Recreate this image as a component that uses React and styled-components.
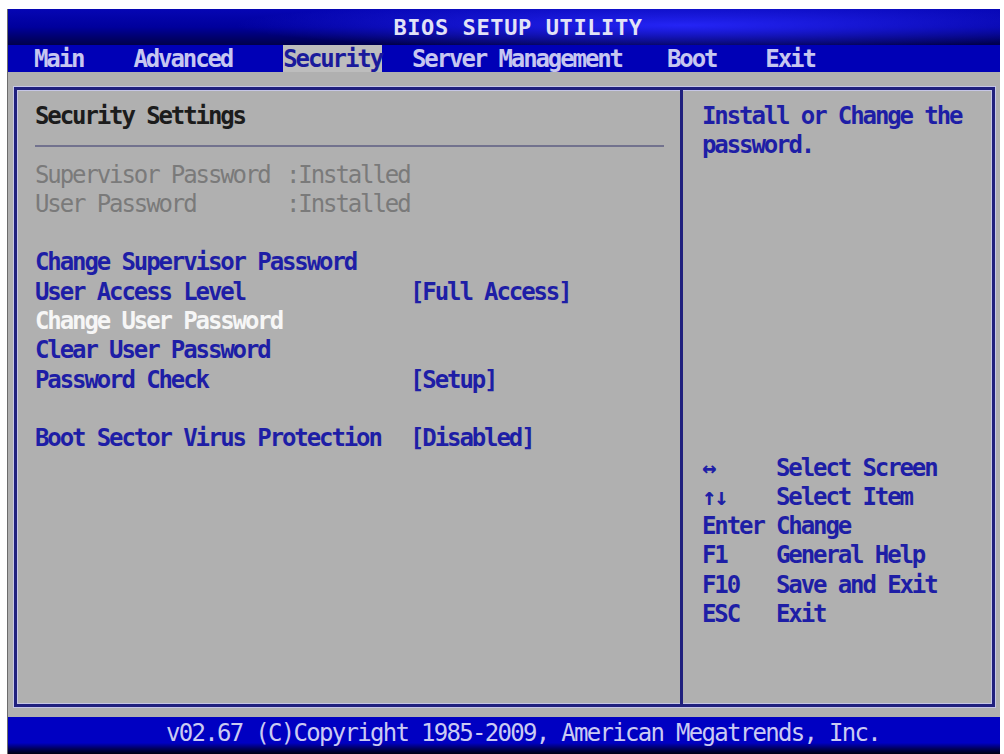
import styled, { createGlobalStyle } from "styled-components";

const GlobalStyle = createGlobalStyle`
  body {
    margin: 0;
    background: #ffffff;
  }
  #root {
    padding: 9px 4px 0 7px;
  }
`;

const ROW = 29.3;

const tabs = [
  { label: "Main", offset: 26 },
  { label: "Advanced", offset: 50 },
  { label: "Security", offset: 51, active: true },
  { label: "Server Management", offset: 30 },
  { label: "Boot", offset: 45 },
  { label: "Exit", offset: 49 },
];

const keys = [
  ["\u2194", "Select Screen"],
  ["\u2191\u2193", "Select Item"],
  ["Enter", "Change"],
  ["F1", "General Help"],
  ["F10", "Save and Exit"],
  ["ESC", "Exit"],
];

const App = () => {
  return (
    <>
      <GlobalStyle />
      <Screen>
        <TitleBar>BIOS SETUP UTILITY</TitleBar>
        <MenuBar>
          {tabs.map((tab) => (
            <Tab key={tab.label} $offset={tab.offset} $active={tab.active}>
              {tab.label}
            </Tab>
          ))}
        </MenuBar>
        <Body>
          <Frame>
            <Settings>
              <Heading>Security Settings</Heading>
              <Rule />
              <Status>
                <span>Supervisor Password</span>
                <span>:Installed</span>
              </Status>
              <Status>
                <span>User Password</span>
                <span>:Installed</span>
              </Status>
              <Blank />
              <Item>
                <span>Change Supervisor Password</span>
              </Item>
              <Item>
                <span>User Access Level</span>
                <span>[Full Access]</span>
              </Item>
              <Item $selected>
                <span>Change User Password</span>
              </Item>
              <Item>
                <span>Clear User Password</span>
              </Item>
              <Item>
                <span>Password Check</span>
                <span>[Setup]</span>
              </Item>
              <Blank />
              <Item>
                <span>Boot Sector Virus Protection</span>
                <span>[Disabled]</span>
              </Item>
            </Settings>
            <Help>
              <HelpText>
                Install or Change the
                <br />
                password.
              </HelpText>
              <Keys>
                {keys.map(([key, action]) => (
                  <KeyRow key={key}>
                    <span>{key}</span>
                    <span>{action}</span>
                  </KeyRow>
                ))}
              </Keys>
            </Help>
          </Frame>
        </Body>
        <Footer>v02.67 (C)Copyright 1985-2009, American Megatrends, Inc.</Footer>
      </Screen>
    </>
  );
};

export default App;

const Screen = styled.div`
  width: 993px;
  height: 745px;
  display: flex;
  flex-direction: column;
  overflow: hidden;
  background: #b0b0b0;
  border-left: 1px solid #6c6c6c;
  box-sizing: border-box;
  font-family: "DejaVu Sans Mono", "Liberation Mono", monospace;
  font-weight: bold;
  font-size: 24px;
  letter-spacing: -2.1px;
  white-space: pre;
`;

const TitleBar = styled.div`
  height: 36px;
  display: flex;
  align-items: center;
  justify-content: center;
  padding-left: 28px;
  color: #e2e2f6;
  font-size: 22px;
  letter-spacing: 0.6px;
  background:
    radial-gradient(ellipse 45% 70% at 68% 45%, rgba(40, 40, 255, 0.9) 0%, rgba(0, 0, 200, 0) 100%),
    linear-gradient(180deg, #0606b4 0%, #00009c 50%, #00004a 100%);
`;

const MenuBar = styled.div`
  height: 27px;
  display: flex;
  align-items: stretch;
  background: #0000b6;
`;

const Tab = styled.div`
  margin-left: ${(p) => p.$offset}px;
  display: flex;
  align-items: center;
  color: ${(p) => (p.$active ? "#1a1a9c" : "#c6c6f0")};
  background: ${(p) => (p.$active ? "#bdbdbd" : "transparent")};
`;

const Body = styled.div`
  flex: 1;
  display: flex;
  padding: 15px 5px 10px 6px;
`;

const Frame = styled.div`
  flex: 1;
  display: flex;
  border: 3px solid #20207e;
  box-shadow: 0 0 0 1px #c6c6e6, inset 0 0 0 1px #c6c6e6;
`;

const Settings = styled.div`
  width: 666px;
  display: flex;
  flex-direction: column;
  padding: 12px 16px 0 18px;
  box-sizing: border-box;
  border-right: 3px solid #20207e;
`;

const Row = styled.div`
  height: ${ROW}px;
  line-height: ${ROW}px;
  flex-shrink: 0;
`;

const Heading = styled(Row)`
  color: #1c1c1c;
`;

const Rule = styled(Row)`
  display: flex;
  align-items: center;
  &::after {
    content: "";
    flex: 1;
    height: 2px;
    background: #72728e;
  }
`;

const Blank = styled(Row)``;

const Status = styled(Row)`
  display: grid;
  grid-template-columns: 251px 1fr;
  color: #7a7a7a;
  font-weight: normal;
`;

const Item = styled(Row)`
  display: grid;
  grid-template-columns: 375px 1fr;
  color: ${(p) => (p.$selected ? "#f6f6f6" : "#1e1ea6")};
`;

const Help = styled.div`
  flex: 1;
  display: flex;
  flex-direction: column;
  padding: 12px 0 0 19px;
  color: #1e1ea6;
`;

const HelpText = styled.div`
  line-height: ${ROW}px;
`;

const Keys = styled.div`
  margin-top: ${ROW * 10}px;
  display: flex;
  flex-direction: column;
`;

const KeyRow = styled(Row)`
  display: grid;
  grid-template-columns: 74px 1fr;
`;

const Footer = styled.div`
  height: 37px;
  display: flex;
  align-items: center;
  justify-content: center;
  padding: 0 0 6px 38px;
  box-sizing: border-box;
  color: #cacaf2;
  font-weight: normal;
  letter-spacing: -1.7px;
  background: linear-gradient(180deg, #0000c2 0%, #0000c2 70%, #00005a 86%, #000010 100%);
`;
